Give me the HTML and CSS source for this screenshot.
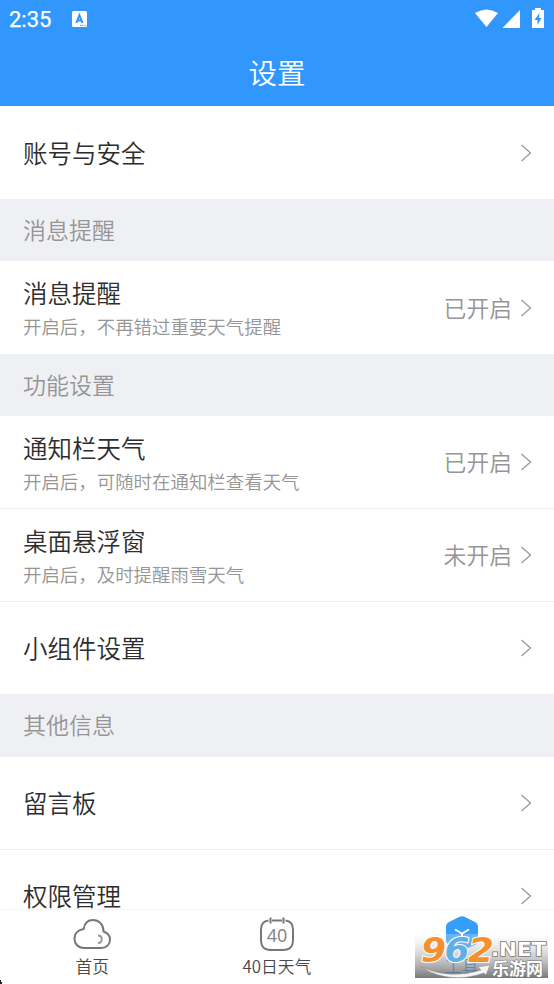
FILE: index.html
```html
<!DOCTYPE html>
<html lang="zh-CN">
<head>
<meta charset="utf-8">
<title>设置</title>
<link rel="stylesheet" href="styles.css">
</head>
<body>
<svg class="defs" width="0" height="0"><symbol id="chevron" viewBox="0 0 12 18"><path d="M1.500 1L10.500 9l-9 8" fill="none" stroke="#999" stroke-width="1.300"/></symbol></svg>
<div class="app">
  <header class="header">
    <div class="status">
      <span class="time">2:35</span>
      <svg class="badge" width="15" height="17" viewBox="0 0 15 17"><rect width="15" height="16" rx="1.500" fill="#fff"/><path d="M4.300 12L7.400 4.300 10.500 12M5.600 9.500h3.800" fill="none" stroke="#3197fd" stroke-width="2"/><path d="M8 14.400h6" stroke="#3197fd" stroke-dasharray="1.300 1"/></svg>
      <svg class="signals" width="70" height="21" viewBox="0 0 70 21"><path d="M1 4Q12.500-3 24 4L12.500 18zM46 1v18H28.500zM58 1h3V-1h6v2h3v18H58z" fill="#fff"/><path d="M65.500 4L60.500 11h3v5l4-7h-2.500z" fill="#3197fd"/></svg>
    </div>
    <h1 class="title">设置</h1>
  </header>
  <main class="list">
    <div class="row"><div class="label">账号与安全</div><svg class="chevron"><use href="#chevron"/></svg></div>
    <h2 class="section">消息提醒</h2>
    <div class="row"><div class="label">消息提醒<p class="hint">开启后，不再错过重要天气提醒</p></div><span class="value">已开启</span><svg class="chevron"><use href="#chevron"/></svg></div>
    <h2 class="section">功能设置</h2>
    <div class="row line"><div class="label">通知栏天气<p class="hint">开启后，可随时在通知栏查看天气</p></div><span class="value">已开启</span><svg class="chevron"><use href="#chevron"/></svg></div>
    <div class="row line"><div class="label">桌面悬浮窗<p class="hint">开启后，及时提醒雨雪天气</p></div><span class="value">未开启</span><svg class="chevron"><use href="#chevron"/></svg></div>
    <div class="row"><div class="label">小组件设置</div><svg class="chevron"><use href="#chevron"/></svg></div>
    <h2 class="section">其他信息</h2>
    <div class="row line"><div class="label">留言板</div><svg class="chevron"><use href="#chevron"/></svg></div>
    <div class="row"><div class="label">权限管理</div><svg class="chevron"><use href="#chevron"/></svg></div>
  </main>
  <nav class="nav">
    <div class="tab">
      <svg width="40" height="36" viewBox="0 0 40 36"><path d="M12 32C6 32 2.500 28 2.500 22.500c0-5 3.500-8.800 9.200-9.600C12.500 7.500 16 4 21 4c6 0 10.500 4.500 10.500 11.500 4 1.500 6.500 4.500 6.500 8 0 5-3.500 8.500-8.500 8.500z" fill="none" stroke="#777" stroke-width="2"/><path d="M26 19.500c5 0 5 7.500 0 7.500" fill="none" stroke="#999" stroke-width="2"/></svg>
      <span>首页</span>
    </div>
    <div class="tab">
      <svg width="36" height="36" viewBox="0 0 36 36"><path d="M9.500 4.500C4 5 2 8 2 13.500v10C2 31 5 34 12 34h12c7 0 10-3 10-10.500v-10C34 8 32 5 26.500 4.500M13 4.500h10M11.500 1.500v6M24.500 1.500v6" fill="none" stroke="#777" stroke-width="2"/><text x="18" y="26" text-anchor="middle" class="days">40</text></svg>
      <span>40日天气</span>
    </div>
    <div class="tab">
      <svg width="36" height="36" viewBox="0 0 36 36"><path d="M15 1q3-1.500 6 0l10 5q3 1.500 3 5v13q0 3-3 5l-10 4q-3 1-6 0l-10-4q-3-2-3-5V11q0-3.500 3-5z" fill="#359dfc"/><path d="M11 13.500l7 4 7-4M18 17.500v4" fill="none" stroke="#fff" stroke-width="2"/></svg>
      <span class="active">工具</span>
    </div>
  </nav>
  <svg class="corner" width="3" height="4"><path d="M0 0h1v2h1v2H0z" fill="#222"/></svg>
  <svg class="watermark" width="133" height="44" viewBox="0 0 133 44">
    <defs><linearGradient id="shade" x2="0" y2="1"><stop stop-color="#fff" stop-opacity=".25"/><stop offset=".5" stop-color="#999" stop-opacity=".45"/><stop offset="1" stop-color="#666" stop-opacity=".88"/></linearGradient></defs>
    <rect width="133" height="44" fill="url(#shade)"/>
    <path d="M6 33Q36 46 66 36l-3-3 12-2-4 10-2-2Q35 51 6 33z" fill="#f5f5f5" stroke="#888" stroke-width=".5"/>
    <g class="digits"><text x="6" y="27.500" textLength="25" lengthAdjust="spacingAndGlyphs" fill="#f5902c">9</text><text x="29.500" y="27.500" textLength="25" lengthAdjust="spacingAndGlyphs" fill="#5faee4">6</text><text x="53" y="27.500" textLength="26" lengthAdjust="spacingAndGlyphs" fill="#f5902c">2</text></g>
    <text class="domain" x="76" y="22" textLength="55" lengthAdjust="spacingAndGlyphs">.NET</text>
    <text class="site" x="77" y="40.500" textLength="51">乐游网</text>
  </svg>
</div>
</body>
</html>
```

FILE: styles.css
```css
* { box-sizing: border-box; }
body { margin: 0; font-family: "Noto Sans CJK SC", sans-serif; font-weight: 350; background: #fff; }
h1, h2, p { margin: 0; font-weight: inherit; }
.defs { position: absolute; }
.app { position: relative; display: flex; flex-direction: column; height: 984px; overflow: hidden; }
.header { flex: none; height: 106px; background: #3197fd; color: #fff; }
.status { display: flex; height: 38px; padding: 0 10px 0 9px; align-items: center; }
.time { font: 400 22px/38px Roboto, sans-serif; -webkit-text-stroke: .25px #fff; padding-top: 2px; width: 63px; }
.signals { margin-left: auto; overflow: visible; }
.title { font-size: 28.500px; line-height: 68px; text-align: center; }
.list { flex: 1; min-height: 0; overflow: hidden; }
.row { display: flex; align-items: center; height: 92.800px; padding: .8px 22px 0 23px; }
.line { border-bottom: 1px solid #efeff2; }
.label { flex: 1; font-size: 24.500px; line-height: 36px; color: #2d2d2d; }
.hint { font-size: 18.450px; line-height: 28px; color: #959595; margin-top: 1px; }
.value { font-size: 22.800px; color: #959595; margin: -1px 8px 0 0; }
.chevron { width: 12px; height: 18px; }
.section { height: 62.250px; padding-left: 23px; font-size: 23px; line-height: 61px; color: #959595; background: #eff0f4; }
.nav { flex: none; display: grid; grid-template-columns: repeat(3, 1fr); height: 75px; padding-top: 6px; border-top: 1px solid #f5f5f5; }
.tab { display: flex; flex-direction: column; align-items: center; font-size: 16.800px; line-height: 28px; color: #484848; }
.active { color: #3197fd; }
.days { font: 18px "Noto Sans", sans-serif; fill: #888; }
.corner { position: absolute; left: 0; bottom: 0; }
.watermark { position: absolute; left: 415px; top: 934px; overflow: visible; }
.digits { font: italic 700 34px "DejaVu Sans", sans-serif; stroke: #fff; stroke-width: 2px; paint-order: stroke; }
.domain { font: 700 19px "DejaVu Sans", sans-serif; fill: #fff; stroke: #777; stroke-width: 1.500px; paint-order: stroke; }
.site { font-size: 17px; font-weight: 700; fill: #fff; stroke: #777; stroke-width: 1px; paint-order: stroke; }
```
